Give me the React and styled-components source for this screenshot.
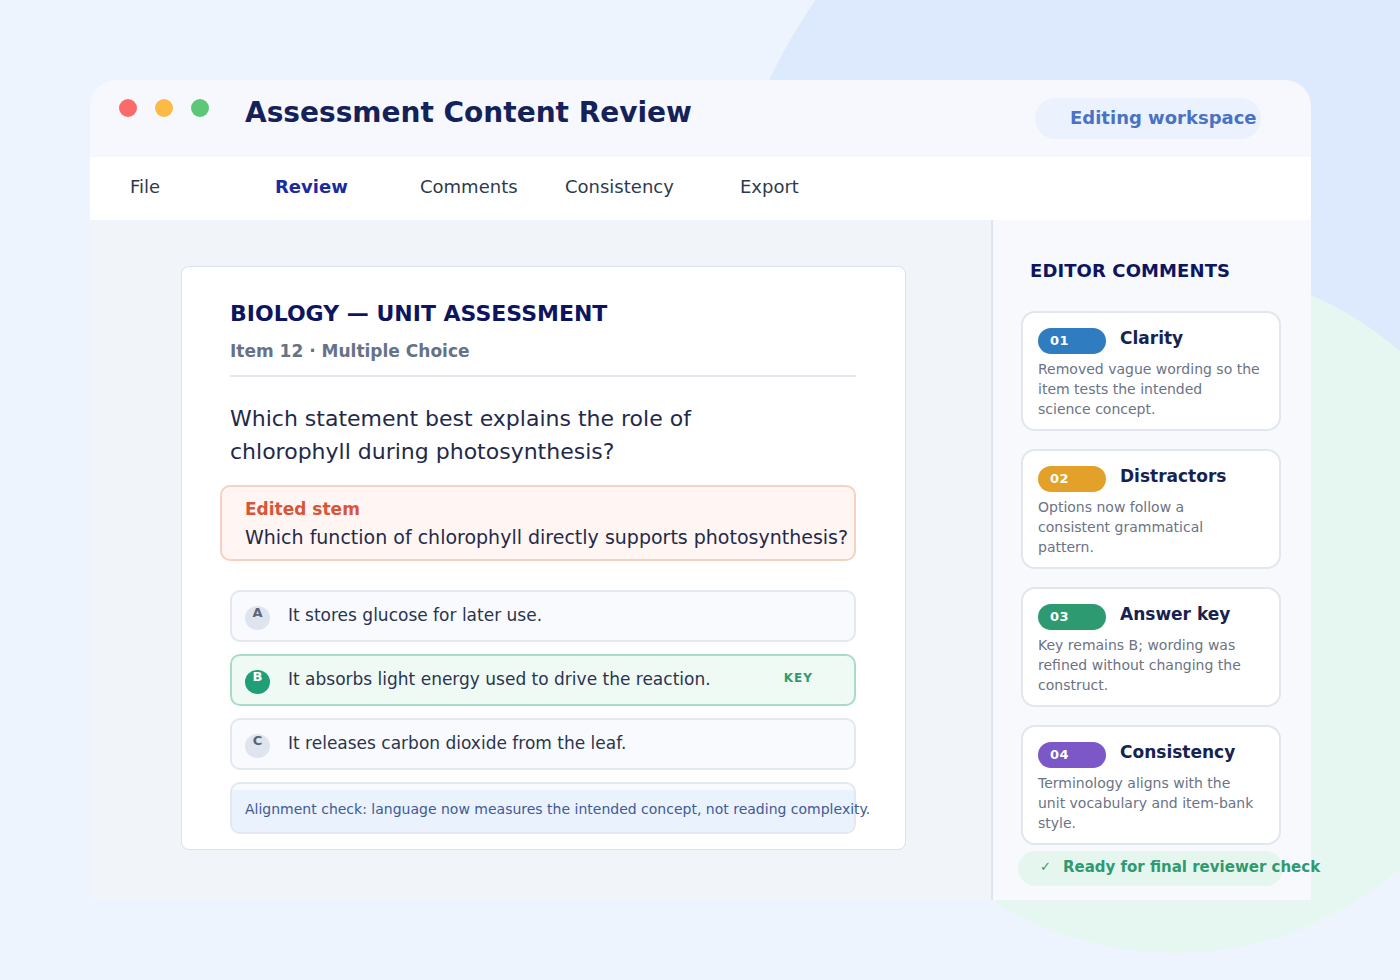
import React from "react";
import styled, { createGlobalStyle } from "styled-components";

const GlobalStyle = createGlobalStyle`
  * { box-sizing: border-box; }
  html, body { margin: 0; padding: 0; }
  body {
    background: #eef4fe;
    font-family: "DejaVu Sans", "Liberation Sans", sans-serif;
  }
`;

const Page = styled.div`
  position: relative;
  width: 1400px;
  height: 980px;
  overflow: hidden;
  padding: 80px 89px 0 90px;
  background: #eef4fe;
`;

const Blob = styled.div`
  position: absolute;
  border-radius: 50%;
  left: ${(p) => p.$x - p.$r}px;
  top: ${(p) => p.$y - p.$r}px;
  width: ${(p) => p.$r * 2}px;
  height: ${(p) => p.$r * 2}px;
  background: ${(p) => p.$color};
`;

const Window = styled.div`
  position: relative;
  width: 1221px;
  display: flex;
  flex-direction: column;
`;

const Header = styled.header`
  height: 77px;
  display: flex;
  align-items: center;
  padding: 0 50px 0 29px;
  background: #f6f8fd;
  border-radius: 26px 26px 0 0;
`;

const LeftGroup = styled.div`
  display: flex;
  align-items: center;
  margin-bottom: 13px;
`;

const Dots = styled.div`
  display: flex;
  gap: 18px;
  margin-bottom: 8px;
`;

const Dot = styled.span`
  width: 18px;
  height: 18px;
  border-radius: 50%;
  background: ${(p) => p.$color};
`;

const Title = styled.h1`
  margin: 0 0 0 36px;
  font-size: 28px;
  font-weight: 700;
  color: #142259;
`;

const WorkspacePill = styled.div`
  margin-left: auto;
  height: 41px;
  width: 226px;
  border-radius: 21px;
  background: #ebf2fd;
  display: flex;
  align-items: center;
  padding: 0 0 2px 35px;
  white-space: nowrap;
  font-size: 18px;
  font-weight: 700;
  color: #4a72c4;
`;

const Nav = styled.nav`
  height: 63px;
  display: flex;
  align-items: center;
  padding: 0 0 4px 40px;
  background: #ffffff;
`;

const NavItem = styled.span`
  width: ${(p) => p.$w}px;
  font-size: 18px;
  font-weight: ${(p) => (p.$active ? 700 : 400)};
  color: ${(p) => (p.$active ? "#1c2aa0" : "#2f394d")};
`;

const Main = styled.div`
  display: flex;
  height: 680px;
`;

const Workspace = styled.section`
  width: 901px;
  background: #f1f5f9;
  padding: 46px 0 0 91px;
`;

const Card = styled.article`
  width: 725px;
  background: #ffffff;
  border: 1.5px solid #dce2eb;
  border-radius: 8px;
  padding: 34px 49px 15px 48px;
`;

const CardTitle = styled.h2`
  margin: 0;
  font-size: 22px;
  line-height: 26px;
  font-weight: 700;
  color: #0d1560;
`;

const CardMeta = styled.div`
  margin-top: 13px;
  font-size: 17px;
  line-height: 22px;
  font-weight: 700;
  color: #667287;
`;

const Rule = styled.hr`
  margin: 13px 0 0;
  border: none;
  height: 2px;
  background: #e3e7ee;
`;

const Question = styled.p`
  margin: 25px 0 0;
  max-width: 480px;
  font-size: 22px;
  line-height: 33px;
  color: #1f2a4a;
`;

const StemBox = styled.div`
  margin: 17px 0 0 -10px;
  width: 636px;
  height: 76px;
  background: #fff5f2;
  border: 2px solid #f6d0c2;
  border-radius: 10px;
  padding: 11px 0 0 23px;
  white-space: nowrap;
`;

const StemLabel = styled.div`
  font-size: 17px;
  line-height: 22px;
  font-weight: 700;
  color: #d9553a;
`;

const StemText = styled.div`
  margin-top: 4px;
  font-size: 19px;
  line-height: 26px;
  color: #1f2a4a;
`;

const Options = styled.div`
  margin-top: 29px;
  display: flex;
  flex-direction: column;
  gap: 12px;
`;

const Option = styled.div`
  height: 52px;
  display: flex;
  align-items: center;
  padding: 0 41px 0 13px;
  border: 2px solid ${(p) => (p.$key ? "#a9dcc8" : "#e2e7f0")};
  background: ${(p) => (p.$key ? "#f0faf5" : "#f8fafd")};
  border-radius: 10px;
`;

const Letter = styled.span`
  flex: none;
  width: 25px;
  height: 24px;
  margin-top: 3px;
  border-radius: 50%;
  text-align: center;
  font-size: 13px;
  line-height: 14px;
  font-weight: 700;
  background: ${(p) => (p.$key ? "#1f9e78" : "#dfe5ef")};
  color: ${(p) => (p.$key ? "#ffffff" : "#5a6478")};
`;

const OptionText = styled.span`
  margin: 0 0 3px 18px;
  font-size: 17px;
  line-height: 22px;
  color: #2a3450;
`;

const KeyTag = styled.span`
  margin: 0 0 5px auto;
  font-size: 12px;
  font-weight: 700;
  letter-spacing: 1px;
  color: #2f9a70;
`;

const AlignBox = styled.div`
  height: 52px;
  border: 2px solid #e3e8f0;
  border-radius: 10px;
  background: #f8fafd;
  padding-top: 6px;
`;

const AlignNote = styled.div`
  height: 42px;
  background: #eaf2fe;
  border-radius: 0 0 8px 8px;
  padding: 9px 0 0 13px;
  white-space: nowrap;
  font-size: 14px;
  line-height: 20px;
  color: #3f5a94;
`;

const Sidebar = styled.aside`
  width: 320px;
  background: #f7f9fd;
  border-left: 2px solid #dfe5ee;
  padding: 40px 0 0 28px;
`;

const SideHeading = styled.h3`
  margin: 0 0 0 9px;
  font-size: 18px;
  line-height: 22px;
  font-weight: 700;
  letter-spacing: 0.1px;
  color: #0d1560;
`;

const CommentList = styled.div`
  margin-top: 29px;
  display: flex;
  flex-direction: column;
  gap: 18px;
`;

const CommentCard = styled.div`
  width: 260px;
  height: 120px;
  background: #ffffff;
  border: 2px solid #e1e6ef;
  border-radius: 14px;
  padding: 15px 10px 0 15px;
`;

const CommentHead = styled.div`
  display: flex;
  align-items: flex-start;
`;

const Badge = styled.span`
  width: 68px;
  height: 26px;
  border-radius: 13px;
  background: ${(p) => p.$color};
  color: #ffffff;
  font-size: 13px;
  font-weight: 700;
  line-height: 26px;
  padding-left: 12px;
  letter-spacing: 0.4px;
`;

const CommentTitle = styled.span`
  margin-left: 14px;
  font-size: 17px;
  line-height: 20px;
  font-weight: 700;
  color: #16224f;
`;

const CommentBody = styled.p`
  margin: 5px 0 0;
  max-width: 222.6px;
  font-size: 14px;
  line-height: 20px;
  color: #6b7385;
`;

const ReadyPill = styled.div`
  margin: 6px 0 0 -3px;
  width: 265px;
  height: 35px;
  border-radius: 18px;
  background: #e5f6ee;
  display: flex;
  align-items: center;
  padding: 0 0 4px 22px;
  white-space: nowrap;
  color: #2f9a70;
  font-size: 15px;
  font-weight: 700;
`;

const Check = styled.span`
  font-size: 13px;
  font-weight: 400;
  margin-right: 12px;
`;

const navItems = [
  { label: "File", w: 145 },
  { label: "Review", w: 145, active: true },
  { label: "Comments", w: 145 },
  { label: "Consistency", w: 175 },
  { label: "Export", w: 100 },
];

const options = [
  { letter: "A", text: "It stores glucose for later use." },
  { letter: "B", text: "It absorbs light energy used to drive the reaction.", key: true },
  { letter: "C", text: "It releases carbon dioxide from the leaf." },
];

const comments = [
  { n: "01", color: "#2f7cc1", title: "Clarity", body: "Removed vague wording so the item tests the intended science\u00a0concept." },
  { n: "02", color: "#e4a12a", title: "Distractors", body: "Options now follow a consistent grammatical pattern." },
  { n: "03", color: "#2e9a72", title: "Answer key", body: "Key remains B; wording was refined without changing the construct." },
  { n: "04", color: "#7b57c8", title: "Consistency", body: "Terminology aligns with the unit vocabulary and item-bank style." },
];

export default function App() {
  return (
    <>
      <GlobalStyle />
      <Page>
        <Blob $x={1260} $y={310} $r={542} $color="#dde9fd" />
        <Blob $x={1175} $y={610} $r={343} $color="#e6f6f0" />
        <Window>
          <Header>
            <LeftGroup>
              <Dots>
                <Dot $color="#fb6b6b" />
                <Dot $color="#fbbb45" />
                <Dot $color="#5cc877" />
              </Dots>
              <Title>Assessment Content Review</Title>
            </LeftGroup>
            <WorkspacePill>Editing workspace</WorkspacePill>
          </Header>
          <Nav>
            {navItems.map((n) => (
              <NavItem key={n.label} $w={n.w} $active={n.active}>
                {n.label}
              </NavItem>
            ))}
          </Nav>
          <Main>
            <Workspace>
              <Card>
                <CardTitle>BIOLOGY — UNIT ASSESSMENT</CardTitle>
                <CardMeta>Item 12 · Multiple Choice</CardMeta>
                <Rule />
                <Question>
                  Which statement best explains the role of chlorophyll during photosynthesis?
                </Question>
                <StemBox>
                  <StemLabel>Edited stem</StemLabel>
                  <StemText>Which function of chlorophyll directly supports photosynthesis?</StemText>
                </StemBox>
                <Options>
                  {options.map((o) => (
                    <Option key={o.letter} $key={o.key}>
                      <Letter $key={o.key}>{o.letter}</Letter>
                      <OptionText>{o.text}</OptionText>
                      {o.key && <KeyTag>KEY</KeyTag>}
                    </Option>
                  ))}
                  <AlignBox>
                    <AlignNote>
                      Alignment check: language now measures the intended concept, not reading complexity.
                    </AlignNote>
                  </AlignBox>
                </Options>
              </Card>
            </Workspace>
            <Sidebar>
              <SideHeading>EDITOR COMMENTS</SideHeading>
              <CommentList>
                {comments.map((c) => (
                  <CommentCard key={c.n}>
                    <CommentHead>
                      <Badge $color={c.color}>{c.n}</Badge>
                      <CommentTitle>{c.title}</CommentTitle>
                    </CommentHead>
                    <CommentBody>{c.body}</CommentBody>
                  </CommentCard>
                ))}
              </CommentList>
              <ReadyPill>
                <Check>✓</Check>
                Ready for final reviewer check
              </ReadyPill>
            </Sidebar>
          </Main>
        </Window>
      </Page>
    </>
  );
}
